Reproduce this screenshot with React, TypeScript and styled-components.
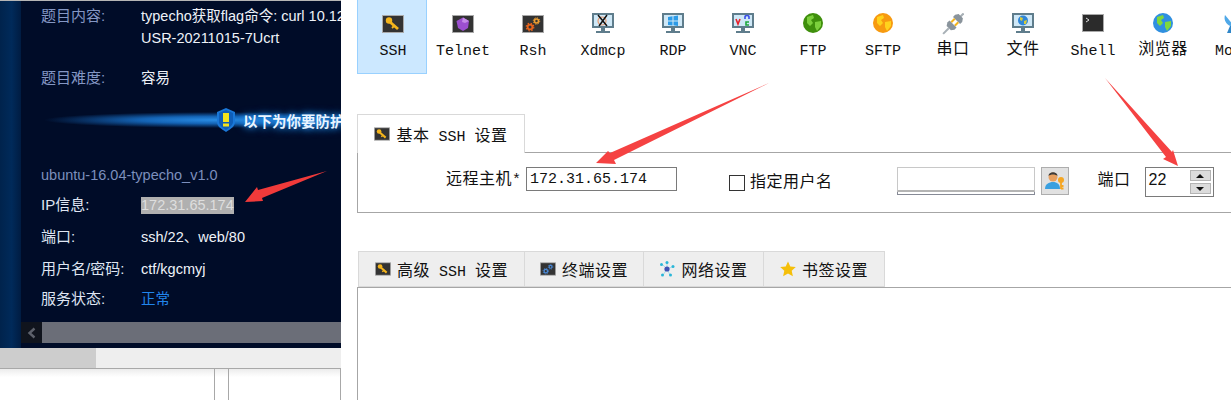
import React from "react"
import styled, { createGlobalStyle } from "styled-components"

const GlobalStyle = createGlobalStyle`
  html, body {
    margin: 0;
    padding: 0;
    width: 1231px;
    height: 400px;
    overflow: hidden;
    background: #fff;
  }
  * { box-sizing: border-box; }
`

const Page = styled.div`
  position: relative;
  display: flex;
  width: 1231px;
  height: 400px;
  overflow: hidden;
`

/* ---------- left: browser with the exercise info ---------- */

const LeftPane = styled.div`
  width: 341px;
  flex: none;
  display: flex;
  flex-direction: column;
  font-family: "Liberation Sans", "Noto Sans CJK SC", sans-serif;
  font-size: 14.5px;
`

const DarkArea = styled.div`
  height: 348px;
  flex: none;
  display: flex;
  background: #000c28;
  border-top: 1px solid #b5b5b5;
`

const Strip = styled.div`
  width: 21px;
  flex: none;
  background: linear-gradient(90deg, #00234c 0%, #002a5a 55%, #001c42 100%);
`

const Content = styled.div`
  flex: 1;
  min-width: 0;
  display: flex;
  flex-direction: column;
  padding-bottom: 5px;
`

const Info = styled.div`
  flex: 1;
  min-height: 0;
  overflow: hidden;
  display: flex;
  flex-direction: column;
`

const Row = styled.div<{ $top: number }>`
  display: grid;
  grid-template-columns: 100px 1fr;
  padding-left: 20px;
  margin-top: ${({ $top }) => $top}px;
  line-height: 22px;
  white-space: nowrap;
`

const Label = styled.div<{ $dim?: boolean }>`
  font-size: 15px;
  color: ${({ $dim }) => ($dim ? "#8497c4" : "#dfe5f2")};
`

const Value = styled.div<{ $accent?: boolean }>`
  color: ${({ $accent }) => ($accent ? "#2185ec" : "#eef2f8")};
  line-height: 22px;
`

const Selected = styled.span`
  display: inline-block;
  background: #b0b0b0;
  color: #dedede;
  line-height: 17px;
  height: 17px;
`

const Banner = styled.div`
  height: 32px;
  margin-top: 15px;
  display: flex;
  align-items: center;
  gap: 7px;
  padding-left: 195px;
  background: radial-gradient(ellipse 175px 8px at 198px 50%, #2a8ee6 0%, #1463b4 45%, transparent 100%);
`

const BannerText = styled.span`
  color: #e9f4ff;
  font-weight: bold;
  white-space: nowrap;
  text-shadow: 0 0 6px #2a8ee6, 0 0 10px #1a78d0;
`

const VmName = styled.div`
  margin-top: 28px;
  padding-left: 20px;
  color: #7c8fbd;
  line-height: 22px;
`

const DarkScroll = styled.div`
  height: 21px;
  flex: none;
  display: flex;
  background: #6b6e78;
`

const DarkScrollButton = styled.div`
  width: 21px;
  display: flex;
  align-items: center;
  justify-content: center;
  background: #10141d;
`

const PageScroll = styled.div`
  height: 21px;
  flex: none;
  display: flex;
  background: #eeeeee;
  border-bottom: 1px solid #a8a8a8;
`

const PageThumb = styled.div`
  width: 96px;
  background: #cdcdcd;
`

const Lower = styled.div`
  flex: 1;
  display: flex;
  background: linear-gradient(180deg, #ececec 0, #ffffff 8px);
  border-right: 1px solid #a8a8a8;
`

const Cell = styled.div<{ $w: number }>`
  width: ${({ $w }) => $w}px;
  flex: none;
  border-right: 1px solid #a8a8a8;
`

/* ---------- right: connection dialog ---------- */

const RightPane = styled.div`
  flex: 1;
  min-width: 0;
  overflow: hidden;
  background: #fff;
  color: #111;
  font-family: "Liberation Mono", "Noto Sans CJK SC", monospace;
  font-size: 15px;
  padding-left: 16px;
  display: flex;
  flex-direction: column;
`

const Han = styled.span`
  font-family: "Noto Sans CJK SC", sans-serif;
  font-size: 16px;
  letter-spacing: 0.5px;
`

const Toolbar = styled.div`
  height: 74px;
  flex: none;
  display: flex;
`

const ToolItem = styled.div<{ $active?: boolean }>`
  width: 70px;
  height: 74px;
  flex: none;
  display: flex;
  flex-direction: column;
  align-items: center;
  padding: 13px 0 0 2px;
  gap: 3px;
  white-space: nowrap;
  line-height: 20px;
  background: ${({ $active }) => ($active ? "#cce8ff" : "transparent")};
  border: 1px solid ${({ $active }) => ($active ? "#99d1ff" : "transparent")};
  border-top: none;
`

const ToolLabel = styled.div<{ $han?: boolean }>`
  margin-top: ${({ $han }) => ($han ? -1 : 4)}px;
`

const TabStrip = styled.div<{ $top: number; $h: number; $indent?: number }>`
  display: flex;
  margin-top: ${({ $top }) => $top}px;
  margin-left: ${({ $indent }) => $indent ?? 0}px;
  height: ${({ $h }) => $h}px;
  flex: none;
  position: relative;
  z-index: 1;
`

const Tab = styled.div<{ $w: number; $active?: boolean }>`
  width: ${({ $w }) => $w}px;
  flex: none;
  display: flex;
  align-items: center;
  justify-content: center;
  gap: 6px;
  white-space: pre;
  background: ${({ $active }) => ($active ? "#fff" : "#eeeeee")};
  border: 1px solid #d9d9d9;
  border-left-width: ${({ $active }) => ($active ? 1 : 0)}px;
  border-bottom: ${({ $active }) => ($active ? "none" : "1px solid #d9d9d9")};
  &:first-child { border-left-width: 1px; }
`

const SettingsPanel = styled.div`
  height: 61px;
  flex: none;
  margin-top: -1px;
  width: 900px;
  border: 1px solid #a6a6a6;
  display: flex;
  align-items: flex-start;
  padding-top: 14px;
`

const FieldLabel = styled.div<{ $left: number; $shift?: number }>`
  margin-left: ${({ $left }) => $left}px;
  margin-top: ${({ $shift }) => $shift ?? 0}px;
  line-height: 24px;
  white-space: nowrap;
  flex: none;
`

const HostInput = styled.div`
  width: 151px;
  height: 24px;
  margin-left: 5px;
  flex: none;
  border: 1px solid #7a7a7a;
  padding-left: 3px;
  line-height: 24px;
`

const Check = styled.div`
  width: 16px;
  height: 16px;
  margin: 8px 0 0 52px;
  flex: none;
  border: 1px solid #333;
`

const Combo = styled.div`
  width: 138px;
  height: 28px;
  margin-left: 64px;
  flex: none;
  display: flex;
  flex-direction: column;
`

const ComboField = styled.div`
  height: 25px;
  border: 1px solid #c8c8c8;
  border-bottom: 2px solid #b4b4b4;
`

const ComboLine = styled.div`
  height: 3px;
  border: 1px solid #868a96;
  border-top: none;
`

const UserButton = styled.div`
  width: 28px;
  height: 28px;
  margin-left: 6px;
  flex: none;
  background: #e1e1e1;
  border: 1px solid #adadad;
  display: flex;
  align-items: center;
  justify-content: center;
`

const Spin = styled.div`
  width: 69px;
  height: 30px;
  margin-left: 14px;
  flex: none;
  border: 1px solid #7a7a7a;
  display: flex;
  justify-content: space-between;
  padding: 2px 2px 2px 3px;
  line-height: 19px;
  font-family: "Liberation Sans", sans-serif;
  font-size: 16px;
`

const SpinButtons = styled.div`
  width: 21px;
  display: flex;
  flex-direction: column;
  gap: 2px;
`

const SpinButton = styled.div<{ $down?: boolean }>`
  flex: 1;
  background: #dcdcdc;
  border: 1px solid #b4b4b4;
  display: flex;
  align-items: center;
  justify-content: center;
  &::after {
    content: "";
    border-left: 4px solid transparent;
    border-right: 4px solid transparent;
    ${({ $down }) => ($down ? "border-top: 4px solid #111;" : "border-bottom: 4px solid #111;")}
  }
`

const LowerPanel = styled.div`
  flex: 1;
  width: 900px;
  border: 1px solid #a6a6a6;
  border-bottom: none;
`

const Annotations = styled.svg`
  position: absolute;
  left: 0;
  top: 0;
  z-index: 5;
  pointer-events: none;
`

/* ---------- icons ---------- */

const Svg = ({ w = 22, h = 22, children }: { w?: number; h?: number; children: React.ReactNode }) => (
  <svg width={w} height={h} viewBox="0 0 22 22" style={{ flex: "none" }}>
    {children}
  </svg>
)

const DarkBox = () => <rect x="0.5" y="2.5" width="21" height="17" fill="#333" stroke="#a9a9a9" />

const KeyIcon = ({ size = 22 }: { size?: number }) => (
  <Svg w={size} h={size}>
    <DarkBox />
    <circle cx="7" cy="7.500" r="3.200" fill="#f5b51c" />
    <path d="M8 9l8 7" stroke="#f5b51c" strokeWidth="2.800" />
    <path d="M12 13l-2 2" stroke="#f5b51c" strokeWidth="1.800" />
  </Svg>
)

const GemIcon = () => (
  <Svg>
    <DarkBox />
    <path d="M11 4.500l6 3.500 -1 7 -5 3 -5-3 -1.500-7z" fill="#9c4fd0" />
    <path d="M11 4.500l6 3.500 -4 2 -3-1z" fill="#c58ae8" />
  </Svg>
)

const GearsIcon = ({ a = "#e8641c", b = "#f0a030", size = 22 }: { a?: string; b?: string; size?: number }) => (
  <Svg w={size} h={size}>
    <DarkBox />
    <circle cx="8" cy="14" r="2.400" fill="none" stroke={a} strokeWidth="1.800" />
    <circle cx="8" cy="14" r="3.800" fill="none" stroke={a} strokeWidth="1.200" strokeDasharray="1.500 1.500" />
    <circle cx="14.500" cy="8" r="2" fill="none" stroke={b} strokeWidth="1.600" />
    <circle cx="14.500" cy="8" r="3.200" fill="none" stroke={b} strokeWidth="1" strokeDasharray="1.300 1.200" />
  </Svg>
)

const Monitor = ({ children }: { children?: React.ReactNode }) => (
  <Svg>
    <rect x="0" y="0" width="22" height="15" fill="#5f7d8c" />
    <rect x="2" y="2" width="18" height="11" fill="#cfe8f7" />
    <rect x="9" y="15" width="4" height="3" fill="#5f7d8c" />
    <rect x="4" y="18" width="14" height="2" fill="#5f7d8c" />
    {children}
  </Svg>
)

const Globe = ({ sea, land }: { sea: string; land: string }) => (
  <Svg>
    <circle cx="11" cy="10" r="10" fill={sea} />
    <path d="M5 4l6-2 1 3 -3 2 2 3 -3 3 -3-3zM13 9l6-1 0 5 -4 5 -2-4z" fill={land} />
  </Svg>
)

const PlugIcon = () => (
  <Svg>
    <g transform="rotate(45 11 11)">
      <rect x="10" y="-4" width="2" height="5" fill="#a8b0b6" />
      <path d="M8 0h6l2 3v3H6V3z" fill="#8a949c" />
      <rect x="7.500" y="6" width="2" height="5" fill="#f5b51c" />
      <rect x="12.500" y="6" width="2" height="5" fill="#f5b51c" />
      <path d="M6 11h10v3l-2 3H8l-2-3z" fill="#8a949c" />
      <rect x="10" y="17" width="2" height="8" fill="#a8b0b6" />
    </g>
  </Svg>
)

const TerminalIcon = () => (
  <Svg>
    <rect x="0.5" y="1.500" width="21" height="17" fill="#2b2b2b" stroke="#a9a9a9" />
    <path d="M4 5l3 2 -3 2" fill="none" stroke="#ddd" strokeWidth="1" />
  </Svg>
)

const DishIcon = () => (
  <Svg>
    <path d="M3 2c-2 6 3 12 10 12z" fill="#4fa8e8" />
    <path d="M8 13l-3 7h9l-3-7z" fill="#2f86c8" />
  </Svg>
)

const UserKeyIcon = () => (
  <svg width="22" height="22" viewBox="0 0 22 22">
    <circle cx="9" cy="7" r="4.500" fill="#e8a060" />
    <path d="M4.500 6c0-5 9-5 9 0 -2-2-7-2-9 0z" fill="#3c3c3c" />
    <path d="M1 19c0-5 4-7 8-7s7 2 7 7z" fill="#3aa0e0" />
    <circle cx="17" cy="10" r="3" fill="#f5a623" />
    <path d="M17 12v7M17 16h2.500M17 18.500h2.500" stroke="#f5a623" strokeWidth="1.800" />
  </svg>
)

const NetworkIcon = () => (
  <svg width="16" height="16" viewBox="0 0 16 16" style={{ flex: "none" }}>
    <path d="M8 8L3 3M8 8l5-2M8 8l-4 6M8 8l3 6M8 8V1" stroke="#8fd6e8" strokeWidth="0.8" />
    <circle cx="8" cy="8" r="2.600" fill="#3f51b5" />
    <circle cx="8" cy="1.500" r="1.500" fill="#29b6d8" />
    <circle cx="2.500" cy="3.500" r="1.500" fill="#29b6d8" />
    <circle cx="14" cy="5.500" r="1.500" fill="#29b6d8" />
    <circle cx="3.500" cy="14" r="1.500" fill="#29b6d8" />
    <circle cx="11.500" cy="14" r="1.500" fill="#29b6d8" />
  </svg>
)

const StarIcon = () => (
  <svg width="16" height="16" viewBox="0 0 16 16" style={{ flex: "none" }}>
    <path d="M8 .5l2.300 5 5.500.6 -4.100 3.700 1.200 5.400 -4.900-2.800 -4.900 2.800 1.200-5.400 -4.100-3.700 5.500-.6z" fill="#f5bf0a" />
  </svg>
)

const ShieldIcon = () => (
  <svg width="20" height="24" viewBox="0 0 20 24" style={{ flex: "none" }}>
    <path d="M10 0l9 4v10c0 4-4 7-9 10C5 21 1 18 1 14V4z" fill="#1a78d8" />
    <path d="M10 2l7 3v9c0 3-3 5-7 8C6 19 3 17 3 14V5z" fill="#0f5eb8" />
    <rect x="7" y="5" width="6" height="9" fill="#f4e31c" />
    <rect x="7" y="15.500" width="6" height="3" fill="#f4e31c" />
  </svg>
)

const tools: { label: string; han?: boolean; icon: React.ReactNode; active?: boolean }[] = [
  { label: "SSH", icon: <KeyIcon />, active: true },
  { label: "Telnet", icon: <GemIcon /> },
  { label: "Rsh", icon: <GearsIcon /> },
  {
    label: "Xdmcp",
    icon: (
      <Monitor>
        <circle cx="10" cy="8" r="4" fill="none" stroke="#e89a70" strokeWidth="1.200" />
        <path d="M6 2l9 11M15 2L7 13" stroke="#111" strokeWidth="1.500" />
      </Monitor>
    ),
  },
  {
    label: "RDP",
    icon: (
      <Monitor>
        <path d="M6 4l4.500-.7V7.500H6zM11.500 3.200L16 2.500v5h-4.500zM6 8.500h4.500v4L6 12zM11.500 8.500H16v4.500l-4.500-.7z" fill="#2c9be8" />
      </Monitor>
    ),
  },
  {
    label: "VNC",
    icon: (
      <Monitor>
        <path d="M4 6l2 5 2-5" fill="none" stroke="#e8222c" strokeWidth="1.600" />
        <path d="M13 6V4c0-2 4-2 4 0v2" fill="none" stroke="#3a4ee8" strokeWidth="1.600" />
        <path d="M17 9h-3v3h3" fill="none" stroke="#1fa83c" strokeWidth="1.600" />
      </Monitor>
    ),
  },
  { label: "FTP", icon: <Globe sea="#3f8f0c" land="#7ccf3c" /> },
  { label: "SFTP", icon: <Globe sea="#f79a10" land="#ffd21c" /> },
  { label: "串口", han: true, icon: <PlugIcon /> },
  {
    label: "文件",
    han: true,
    icon: (
      <Monitor>
        <circle cx="11" cy="7.500" r="5" fill="#2f86d8" />
        <path d="M8 4l3 1 -1 3 -2-1zM12 8l3-1 -1 4 -2 0z" fill="#d8cc3c" />
      </Monitor>
    ),
  },
  { label: "Shell", icon: <TerminalIcon /> },
  { label: "浏览器", han: true, icon: <Globe sea="#2f8fe0" land="#7fd83c" /> },
  { label: "Mosh", icon: <DishIcon /> },
]

export default function App() {
  return (
    <Page>
      <GlobalStyle />
      <LeftPane>
        <DarkArea>
          <Strip />
          <Content>
            <Info>
              <Row $top={4}>
                <Label $dim>题目内容:</Label>
                <Value>
                  typecho获取flag命令: curl 10.12.0.1
                  <br />
                  USR-20211015-7Ucrt
                </Value>
              </Row>
              <Row $top={18}>
                <Label $dim>题目难度:</Label>
                <Value>容易</Value>
              </Row>
              <Banner>
                <ShieldIcon />
                <BannerText>以下为你要防护的靶机</BannerText>
              </Banner>
              <VmName>ubuntu-16.04-typecho_v1.0</VmName>
              <Row $top={8}>
                <Label>IP信息:</Label>
                <Value>
                  <Selected>172.31.65.174</Selected>
                </Value>
              </Row>
              <Row $top={10}>
                <Label>端口:</Label>
                <Value>ssh/22、web/80</Value>
              </Row>
              <Row $top={10}>
                <Label>用户名/密码:</Label>
                <Value>ctf/kgcmyj</Value>
              </Row>
              <Row $top={8}>
                <Label>服务状态:</Label>
                <Value $accent>正常</Value>
              </Row>
            </Info>
            <DarkScroll>
              <DarkScrollButton>
                <svg width="10" height="12" viewBox="0 0 10 12">
                  <path d="M7.500 1.500L2.500 6l5 4.500" fill="none" stroke="#5d616b" strokeWidth="2.400" />
                </svg>
              </DarkScrollButton>
            </DarkScroll>
          </Content>
        </DarkArea>
        <PageScroll>
          <PageThumb />
        </PageScroll>
        <Lower>
          <Cell $w={215} />
          <Cell $w={14} />
        </Lower>
      </LeftPane>

      <RightPane>
        <Toolbar>
          {tools.map((tool) => (
            <ToolItem key={tool.label} $active={tool.active}>
              {tool.icon}
              <ToolLabel $han={tool.han}>{tool.han ? <Han>{tool.label}</Han> : tool.label}</ToolLabel>
            </ToolItem>
          ))}
        </Toolbar>

        <TabStrip $top={40} $h={39}>
          <Tab $w={168} $active>
            <KeyIcon size={16} />
            <span>
              <Han>基本</Han> SSH <Han>设置</Han>
            </span>
          </Tab>
        </TabStrip>
        <SettingsPanel>
          <FieldLabel $left={88} $shift={-2}>
            <Han>远程主机</Han>*
          </FieldLabel>
          <HostInput>172.31.65.174</HostInput>
          <Check />
          <FieldLabel $left={5} $shift={1}>
            <Han>指定用户名</Han>
          </FieldLabel>
          <Combo>
            <ComboField />
            <ComboLine />
          </Combo>
          <UserButton>
            <UserKeyIcon />
          </UserButton>
          <FieldLabel $left={29} $shift={-1}>
            <Han>端口</Han>
          </FieldLabel>
          <Spin>
            <span>22</span>
            <SpinButtons>
              <SpinButton />
              <SpinButton $down />
            </SpinButtons>
          </Spin>
        </SettingsPanel>

        <TabStrip $top={38} $h={36} $indent={1}>
          <Tab $w={167}>
            <KeyIcon size={16} />
            <span>
              <Han>高级</Han> SSH <Han>设置</Han>
            </span>
          </Tab>
          <Tab $w={119}>
            <GearsIcon a="#4a8ad8" b="#4a8ad8" size={16} />
            <Han>终端设置</Han>
          </Tab>
          <Tab $w={120}>
            <NetworkIcon />
            <Han>网络设置</Han>
          </Tab>
          <Tab $w={121}>
            <StarIcon />
            <Han>书签设置</Han>
          </Tab>
        </TabStrip>
        <LowerPanel />
      </RightPane>

      <Annotations width="1231" height="400" viewBox="0 0 1231 400">
        <path d="M327 171L258 190L257 187L245 202L263 201L262 198z" fill="#f03a3a" />
        <path d="M769 83L610 153L608 151L596 163L616 164L614 160z" fill="#f54242" />
        <path d="M1105 78L1172 152L1173 150L1178 166L1163 159L1166 157z" fill="#f54242" />
      </Annotations>
    </Page>
  )
}
